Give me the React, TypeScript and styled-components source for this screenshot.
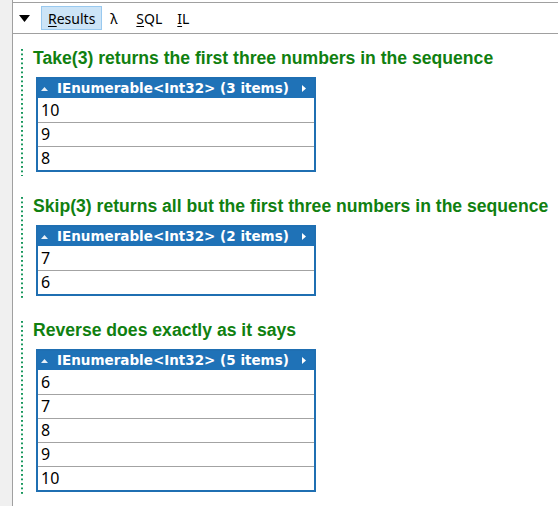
import React from "react";
import styled, {createGlobalStyle} from "styled-components";

const GlobalStyle = createGlobalStyle`
  html, body {
    margin: 0;
    padding: 0;
    background: #ffffff;
  }
  body {
    font-family: "Noto Sans", "Liberation Sans", sans-serif;
    color: #000;
  }
`;

const Frame = styled.div`
  display: flex;
  min-height: 506px;
`;

const Gutter = styled.div`
  width: 12px;
  flex: none;
  background: #f0f0f0;
  border-right: 1px solid #a0a0a0;
`;

const Main = styled.div`
  flex: 1;
  padding-top: 2px;
  min-width: 0;
`;

const Toolbar = styled.div`
  box-sizing: border-box;
  height: 32px;
  display: flex;
  align-items: center;
  gap: 1px;
  padding-left: 6px;
  border-top: 1px solid #a0a0a0;
  border-bottom: 1px solid #a0a0a0;
`;

const Collapse = styled.svg`
  width: 11px;
  height: 7px;
  margin-right: 10px;
`;

const Tab = styled.div<{ $active?: boolean }>`
  box-sizing: border-box;
  height: 24px;
  display: flex;
  align-items: center;
  padding: 0 6px;
  font-size: 14px;
  border: 1px solid ${props => (props.$active ? "#99c9ef" : "transparent")};
  background: ${props => (props.$active ? "#cce4f7" : "transparent")};

  u {
    text-decoration: underline;
    text-underline-offset: 2px;
  }
`;

const Lambda = styled.span`
  display: inline-block;
  width: 11px;
`;

const Results = styled.div`
  padding: 14px 0 0 8px;
`;

// dotted rule on the left, drawn as square dots like the original
const Section = styled.section`
  padding: 0 0 4px 12px;
  margin-bottom: 20px;
  background-image: linear-gradient(to bottom, #17975c 50%, transparent 50%);
  background-size: 2px 4.5px;
  background-repeat: repeat-y;
  background-position: left 1px;
`;

const Heading = styled.h2`
  margin: 0 0 9px 0;
  font-family: "Liberation Sans", Arial, sans-serif;
  font-size: 17.6px;
  line-height: 20px;
  font-weight: bold;
  color: #108010;
  white-space: nowrap;
`;

const Grid = styled.table`
  margin-left: 3px;
  width: 280px;
  border-collapse: collapse;
  border: 2px solid #1f6fb2;
`;

const HeaderCell = styled.th`
  height: 19px;
  padding: 0;
  background: #1f72b7;
  color: #ffffff;
  text-align: left;
`;

const HeaderInner = styled.div`
  display: flex;
  align-items: center;
  padding: 0 8px 0 3px;
  font-family: "DejaVu Sans", Verdana, sans-serif;
  font-size: 13.5px;
  font-weight: bold;
  line-height: 19px;
  white-space: nowrap;
`;

const Title = styled.span`
  flex: 1;
  margin-left: 9px;
`;

const Cell = styled.td`
  height: 23px;
  padding: 0 3px;
  font-size: 16px;
  line-height: 23px;
  border-top: 1px solid #a3a3a3;

  tr:first-child > & {
    border-top: none;
    height: 24px;
  }
`;

const UpArrow = () => (
  <svg width="7" height="4" viewBox="0 0 7 4">
    <polygon points="0,4 3.5,0 7,4" fill="#e8f0f8"/>
  </svg>
);

const RightArrow = () => (
  <svg width="4" height="7" viewBox="0 0 4 7">
    <polygon points="0,0 4,3.5 0,7" fill="#ffffff"/>
  </svg>
);

interface DumpProps {
  heading: string;
  items: number[];
}

function Dump({heading, items}: DumpProps): React.JSX.Element {
  return (
    <Section>
      <Heading>{heading}</Heading>
      <Grid>
        <thead>
        <tr>
          <HeaderCell>
            <HeaderInner>
              <UpArrow/>
              <Title>IEnumerable&lt;Int32&gt; ({items.length} items)</Title>
              <RightArrow/>
            </HeaderInner>
          </HeaderCell>
        </tr>
        </thead>
        <tbody>
        {items.map((n, i) => (
          <tr key={i}>
            <Cell>{n}</Cell>
          </tr>
        ))}
        </tbody>
      </Grid>
    </Section>
  );
}

export default function App(): React.JSX.Element {
  return (
    <>
      <GlobalStyle/>
      <Frame>
        <Gutter/>
        <Main>
          <Toolbar>
            <Collapse viewBox="0 0 11 7">
              <polygon points="0,0 11,0 5.5,7" fill="#000"/>
            </Collapse>
            <Tab $active><span><u>R</u>esults</span></Tab>
            <Tab><Lambda>λ</Lambda></Tab>
            <Tab><span><u>S</u>QL</span></Tab>
            <Tab><span><u>I</u>L</span></Tab>
          </Toolbar>
          <Results>
            <Dump heading="Take(3) returns the first three numbers in the sequence" items={[10, 9, 8]}/>
            <Dump heading="Skip(3) returns all but the first three numbers in the sequence" items={[7, 6]}/>
            <Dump heading="Reverse does exactly as it says" items={[6, 7, 8, 9, 10]}/>
          </Results>
        </Main>
      </Frame>
    </>
  );
}
